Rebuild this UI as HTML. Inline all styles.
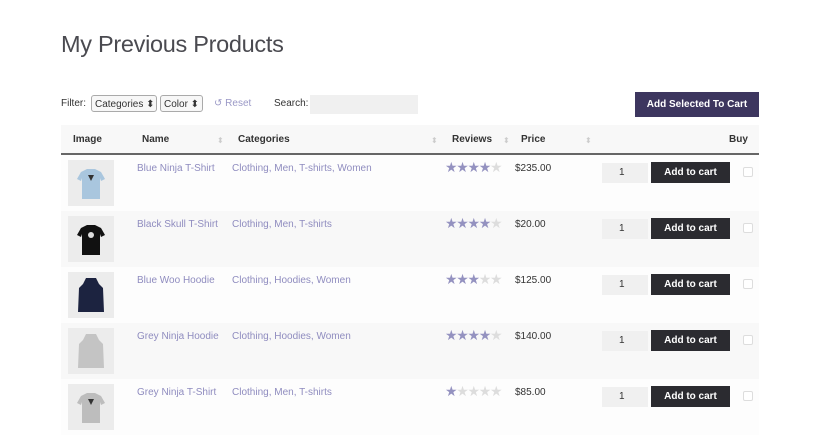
<!DOCTYPE html>
<html><head><style>
body{margin:0;width:820px;height:436px;background:#fff;font-family:"Liberation Sans",sans-serif;position:relative;overflow:hidden;color:#43454b}
.a{position:absolute;white-space:nowrap}
h1{position:absolute;left:61px;top:31px;margin:0;font-weight:normal;font-size:23.5px;color:#4a4a50;letter-spacing:-0.3px}
.sel{position:absolute;top:95px;height:17px;border:1px solid #aaa;border-radius:3px;font-size:10px;line-height:17px;padding:0 3px;background:#f7f7f7;color:#333;white-space:nowrap;box-sizing:border-box}
.row{position:absolute;left:61px;width:698px;height:56px}
.lnk{color:#8f8cbf;font-size:10px}
.th{position:absolute;top:134px;font-size:10px;font-weight:bold;color:#333}
.img{position:absolute;left:7px;top:5px;width:46px;height:46px;background:#ececec}
.qty{position:absolute;left:541px;top:8px;width:46px;height:20px;background:#f0f0f0;font-size:10px;line-height:20px;text-indent:17px;color:#333}
.btn{position:absolute;left:590px;top:7px;width:79px;height:21px;background:#2b2b30;color:#fff;font-size:10px;font-weight:bold;text-align:center;line-height:21px}
.cb{position:absolute;left:682px;top:12px;width:8px;height:8px;border:1px solid #ddd;border-radius:2px;background:#fff}
.st{position:absolute;left:384px;top:4px;font-size:14px;letter-spacing:-1.3px;color:#ddd}
.st span{color:#9492c0}
.pr{position:absolute;left:454px;top:8px;font-size:10px;color:#333}
.sort{position:absolute;top:136px;color:#ccc;font-size:8px}
</style></head><body>
<h1>My Previous Products</h1>
<div class="a" style="left:61px;top:98px;font-size:10px;color:#333">Filter:</div>
<div class="sel" style="left:91px;width:66px">Categories ⬍</div>
<div class="sel" style="left:160px;width:43px">Color ⬍</div>
<div class="a" style="left:214px;top:98px;font-size:10px;color:#9a98c6">↺ Reset</div>
<div class="a" style="left:274px;top:98px;font-size:10px;color:#333">Search:</div>
<div class="a" style="left:310px;top:95px;width:108px;height:19px;background:#f0f0f0"></div>
<div class="a" style="left:635px;top:92px;width:124px;height:25px;background:#3d365f;color:#fff;font-size:10px;font-weight:bold;text-align:center;line-height:25px">Add Selected To Cart</div>
<div class="a" style="left:61px;top:125px;width:698px;height:28px;background:#f8f8f8;border-bottom:2px solid #666"></div>
<div class="th" style="left:73px">Image</div>
<div class="th" style="left:142px">Name</div>
<div class="th" style="left:238px">Categories</div>
<div class="th" style="left:452px">Reviews</div>
<div class="th" style="left:521px">Price</div>
<div class="th" style="left:729px">Buy</div>
<div class="sort" style="left:217px">⬍</div><div class="sort" style="left:431px">⬍</div><div class="sort" style="left:503px">⬍</div><div class="sort" style="left:585px">⬍</div>

<div class="row" style="top:155px;background:#fdfdfd"><div class="img"><svg width="46" height="46"><path d="M13 12 L19 9 L27 9 L33 12 L37 19 L33 21 L32 18 L32 39 L14 39 L14 18 L13 21 L9 19Z" fill="#a9c6de"/><path d="M20 15h6l-3 6z" fill="#333"/></svg></div><div class="a lnk" style="left:76px;top:8px">Blue Ninja T-Shirt</div><div class="a lnk" style="left:171px;top:8px">Clothing, Men, T-shirts, Women</div><div class="st"><span>★★★★</span>★</div><div class="pr">$235.00</div><div class="qty">1</div><div class="btn">Add to cart</div><div class="cb"></div></div>
<div class="row" style="top:211px;background:#f8f8f8"><div class="img"><svg width="46" height="46"><path d="M13 12 L19 9 L27 9 L33 12 L37 19 L33 21 L32 18 L32 39 L14 39 L14 18 L13 21 L9 19Z" fill="#111"/><circle cx="23" cy="19" r="3" fill="#ddd"/></svg></div><div class="a lnk" style="left:76px;top:8px">Black Skull T-Shirt</div><div class="a lnk" style="left:171px;top:8px">Clothing, Men, T-shirts</div><div class="st"><span>★★★★</span>★</div><div class="pr">$20.00</div><div class="qty">1</div><div class="btn">Add to cart</div><div class="cb"></div></div>
<div class="row" style="top:267px;background:#fdfdfd"><div class="img"><svg width="46" height="46"><path d="M18 6 L28 6 L31 12 L35 16 L36 40 L10 40 L11 16 L15 12Z" fill="#1c2340"/></svg></div><div class="a lnk" style="left:76px;top:8px">Blue Woo Hoodie</div><div class="a lnk" style="left:171px;top:8px">Clothing, Hoodies, Women</div><div class="st"><span>★★★</span>★★</div><div class="pr">$125.00</div><div class="qty">1</div><div class="btn">Add to cart</div><div class="cb"></div></div>
<div class="row" style="top:323px;background:#f8f8f8"><div class="img"><svg width="46" height="46"><path d="M18 6 L28 6 L31 12 L35 16 L36 40 L10 40 L11 16 L15 12Z" fill="#c4c4c4"/></svg></div><div class="a lnk" style="left:76px;top:8px">Grey Ninja Hoodie</div><div class="a lnk" style="left:171px;top:8px">Clothing, Hoodies, Women</div><div class="st"><span>★★★★</span>★</div><div class="pr">$140.00</div><div class="qty">1</div><div class="btn">Add to cart</div><div class="cb"></div></div>
<div class="row" style="top:379px;background:#fdfdfd"><div class="img"><svg width="46" height="46"><path d="M13 12 L19 9 L27 9 L33 12 L37 19 L33 21 L32 18 L32 39 L14 39 L14 18 L13 21 L9 19Z" fill="#bdbdbd"/><path d="M20 15h6l-3 6z" fill="#333"/></svg></div><div class="a lnk" style="left:76px;top:8px">Grey Ninja T-Shirt</div><div class="a lnk" style="left:171px;top:8px">Clothing, Men, T-shirts</div><div class="st"><span>★</span>★★★★</div><div class="pr">$85.00</div><div class="qty">1</div><div class="btn">Add to cart</div><div class="cb"></div></div>
</body></html>
